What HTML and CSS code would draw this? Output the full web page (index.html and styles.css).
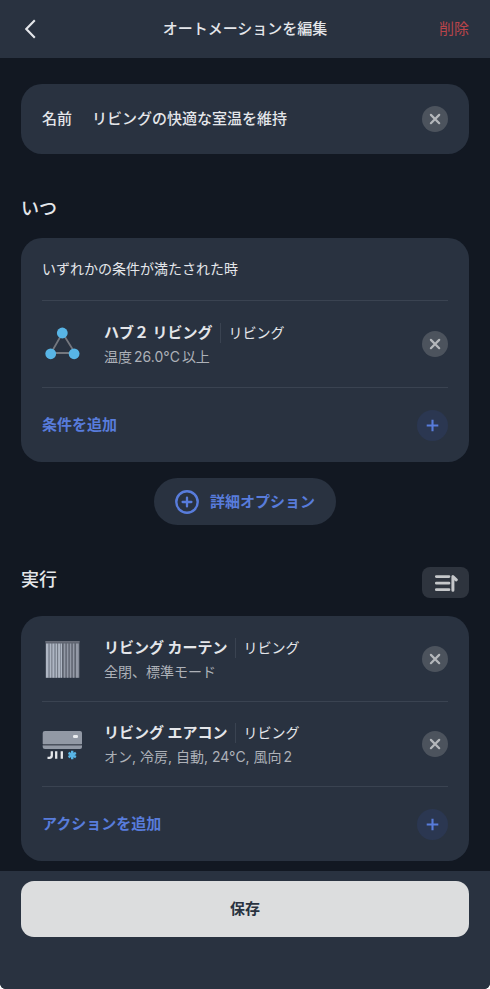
FILE: index.html
```html
<!DOCTYPE html>
<html lang="ja">
<head>
<meta charset="utf-8">
<meta name="viewport" content="width=device-width, initial-scale=1">
<title>オートメーションを編集</title>
<link rel="stylesheet" href="styles.css">
</head>
<body>
<svg class="sprite" aria-hidden="true">
  <symbol id="icon-close" viewBox="0 0 26 26"><path d="M8.9 8.900l8.300 8.300M17.200 8.900l-8.300 8.300" fill="none" stroke="currentColor" stroke-width="2.200" stroke-linecap="round"/></symbol>
  <symbol id="icon-plus" viewBox="0 0 31 31"><path d="M15.500 9.700v11.600M9.700 15.500h11.600" fill="none" stroke="currentColor" stroke-width="2.100"/></symbol>
</svg>
<div class="app">
  <header class="topbar">
    <button class="back" type="button" aria-label="戻る">
      <svg width="12" height="20" viewBox="0 0 12 20"><path d="M9.800 1.200L1.300 10l8.500 8.800" fill="none" stroke="currentColor" stroke-width="2.100"/></svg>
    </button>
    <h1 class="title">オートメーションを編集</h1>
    <button class="delete" type="button">削除</button>
  </header>

  <main class="content">
    <div class="card name-card">
      <label class="name-label" for="name">名前</label>
      <input class="name-input" id="name" type="text" value="リビングの快適な室温を維持">
      <button class="round close" type="button" aria-label="名前を消去"><svg><use href="#icon-close"/></svg></button>
    </div>

    <div class="section-head when-head"><h2>いつ</h2></div>
    <section class="card">
      <p class="condition-mode">いずれかの条件が満たされた時</p>
      <div class="row">
        <svg class="device" width="42" height="42" viewBox="0 0 42 42">
          <path d="M20.500 10L9 30h24z" fill="none" stroke="#74777e" stroke-width="1.800"/>
          <g fill="#58b5e6"><circle cx="20.300" cy="10" r="5.400"/><circle cx="8.700" cy="30.800" r="5.400"/><circle cx="32.100" cy="30.800" r="5.400"/></g>
        </svg>
        <div class="info">
          <p class="line"><strong class="device-name">ハブ２ リビング</strong><span class="room">リビング</span></p>
          <p class="detail">温度<span class="number">26.0°C</span>以上</p>
        </div>
        <button class="round close" type="button" aria-label="条件を削除"><svg><use href="#icon-close"/></svg></button>
      </div>
      <button class="add" type="button"><span>条件を追加</span><svg class="plus"><use href="#icon-plus"/></svg></button>
    </section>

    <button class="options" type="button">
      <svg width="24" height="24" viewBox="0 0 24 24"><g fill="none" stroke="currentColor"><circle cx="12" cy="12" r="10.700" stroke-width="2.400"/><path d="M12 7.600v8.800M7.600 12h8.800" stroke-width="2.300" stroke-linecap="round"/></g></svg>
      詳細オプション
    </button>

    <div class="section-head action-head">
      <h2>実行</h2>
      <button class="sort" type="button" aria-label="並べ替え">
        <svg width="24" height="18" viewBox="0 0 24 18"><path d="M2.300 2.600h12.700M2.300 9.200h12.700M2.300 15.700h12.700" fill="none" stroke="currentColor" stroke-width="2.700" stroke-linecap="round"/><path d="M18.900 16.300V2.500l3.400 3.300" fill="none" stroke="currentColor" stroke-width="3" stroke-linecap="round" stroke-linejoin="round"/></svg>
      </button>
    </div>
    <section class="card">
      <div class="row">
        <svg class="device" width="42" height="42" viewBox="0 0 42 42">
          <path d="M3.500 3h34v36.700h-34z" fill="#5d636f"/>
          <path d="M3.500 3h34v1.500h-34z" fill="#686d79"/>
          <path d="M4 5.500h2.600v34.200H4zM7.500 5.500h2v34.200h-2zM10.300 5.500h2.300v34.200h-2.300zM13.400 5.500h1.900v34.200h-1.900zM16.100 5.500h1.900v34.200h-1.900zM18.500 5.500H20v34.200h-1.500z" fill="#aeb6c3"/>
          <path d="M21.700 5.500h1.700v34.200h-1.700zM24.800 5.500h1.600v34.200h-1.600zM27.800 5.500h1.500v34.200h-1.500zM30.800 5.500h1.600v34.200h-1.600zM34 5.500h2.700v34.200H34z" fill="#9399a6"/>
          <path d="M6.600 5.500h.9v34.200h-.9zM12.600 5.500h.8v34.200h-.8z" fill="#848c99"/>
        </svg>
        <div class="info">
          <p class="line"><strong class="device-name">リビング カーテン</strong><span class="room">リビング</span></p>
          <p class="detail">全閉、標準モード</p>
        </div>
        <button class="round close" type="button" aria-label="カーテンを削除"><svg><use href="#icon-close"/></svg></button>
      </div>
      <div class="row">
        <svg class="device" width="42" height="42" viewBox="0 0 42 42">
          <path d="M3 8h35q2 0 2 2v11H.7V10Q.7 8 3 8z" fill="#9299a5"/>
          <path d="M.7 22.300H40v1.700q0 2-2 2H3Q.7 26 .7 24z" fill="#9299a5"/>
          <path d="M1 21h38.700v1.300H1z" fill="#4b525e"/>
          <rect x="31" y="12" width="5" height="3" rx="1.200" fill="#e9ecef"/>
          <path d="M9.800 28.200v4.300q0 2.300-2.300 2.300H5.500M14.200 28.200v7.500M19.800 28.200v7.500" fill="none" stroke="#e5e7ea" stroke-width="2.300"/>
          <path d="M30.200 27.700v8.600M26.500 29.900l7.400 4.200M33.900 29.900l-7.400 4.200" fill="none" stroke="#58b5e6" stroke-width="2.400"/>
        </svg>
        <div class="info">
          <p class="line"><strong class="device-name">リビング エアコン</strong><span class="room">リビング</span></p>
          <p class="detail">オン, 冷房, 自動, 24°C, 風向<span class="number">2</span></p>
        </div>
        <button class="round close" type="button" aria-label="エアコンを削除"><svg><use href="#icon-close"/></svg></button>
      </div>
      <button class="add" type="button"><span>アクションを追加</span><svg class="plus"><use href="#icon-plus"/></svg></button>
    </section>
  </main>

  <footer class="footer"><button class="save" type="button">保存</button></footer>
</div>
</body>
</html>
```
FILE: styles.css
```css
* { box-sizing: border-box; }
html { background: #fff; }
body {
  margin: 0;
  color: #e4e6ea;
  font: 400 14px/24px Inter, "Noto Sans CJK JP", sans-serif;
}
h1, h2, p { margin: 0; }
button, input {
  margin: 0;
  padding: 0;
  border: 0;
  background: none;
  color: inherit;
  font: inherit;
}
button { cursor: pointer; }
svg { display: block; flex: none; }
.sprite { display: none; }

.app {
  display: flex;
  flex-direction: column;
  min-height: 100vh;
  overflow: hidden;
  border-radius: 0 0 6px 6px;
  background: #121822;
}
.topbar {
  display: grid;
  grid-template-columns: 1fr auto 1fr;
  align-items: center;
  height: 58px;
  padding: 0 21px;
  background: #293240;
}
.back { justify-self: start; padding: 8px 4px; }
.title { font-size: 15px; font-weight: 500; }
.delete { justify-self: end; color: #b9444a; font-size: 15px; }

.content {
  flex: 1;
  display: flex;
  flex-direction: column;
  padding: 26px 21px 10px;
}
.card {
  padding: 0 21px;
  border-radius: 21px;
  background: #293240;
}
.name-card {
  display: flex;
  align-items: center;
  gap: 20px;
  height: 70px;
  font-size: 15px;
  font-weight: 500;
}
.name-input { flex: 1; min-width: 0; outline: 0; }
.round {
  flex: none;
  width: 26px;
  height: 26px;
  border-radius: 50%;
}
.close { background: #4c535d; color: #b4b7bb; }
.close svg { width: 26px; height: 26px; }

.section-head {
  display: flex;
  align-items: flex-start;
  justify-content: space-between;
  padding-top: 42px;
}
.section-head h2 { font-size: 18px; font-weight: 500; line-height: 26px; }
.when-head { height: 84px; }
.action-head { height: 91px; }

.condition-mode { padding: 19px 0; }
.row {
  display: flex;
  align-items: center;
  height: 85px;
}
.condition-mode + .row { height: 87px; border-top: 1px solid #3a4351; }
.row + .row, .add { border-top: 1px solid #3a4351; }
.device { margin-right: 20px; }
.info { flex: 1; min-width: 0; padding-top: 2px; }
.line { display: flex; align-items: center; }
.device-name { font-size: 15px; font-weight: 700; }
.room {
  margin-left: 7px;
  padding-left: 8px;
  border-left: 1px solid #3a4351;
  line-height: 20px;
}
.detail { color: #adb1b8; }
.number { margin: 0 2px; }
.add {
  display: flex;
  align-items: center;
  justify-content: space-between;
  width: 100%;
  height: 75px;
  color: #587cdb;
  font-size: 15px;
  font-weight: 700;
}
.plus {
  width: 31px;
  height: 31px;
  border-radius: 50%;
  background: #2b3751;
}
.options {
  display: flex;
  align-items: center;
  align-self: center;
  gap: 11px;
  height: 47px;
  margin-top: 16px;
  padding: 0 21px;
  border-radius: 24px;
  background: #293240;
  color: #587cdb;
  font-size: 15px;
  font-weight: 700;
}
.sort {
  display: grid;
  place-items: center;
  width: 47px;
  height: 31px;
  border-radius: 8px;
  background: #2e343e;
  color: #c5c7ca;
}
.footer {
  height: 118px;
  padding: 10px 21px 0;
  background: #293240;
}
.save {
  width: 100%;
  height: 56px;
  border-radius: 13px;
  background: #dcddde;
  color: #293240;
  font-size: 15px;
  font-weight: 700;
}
```
